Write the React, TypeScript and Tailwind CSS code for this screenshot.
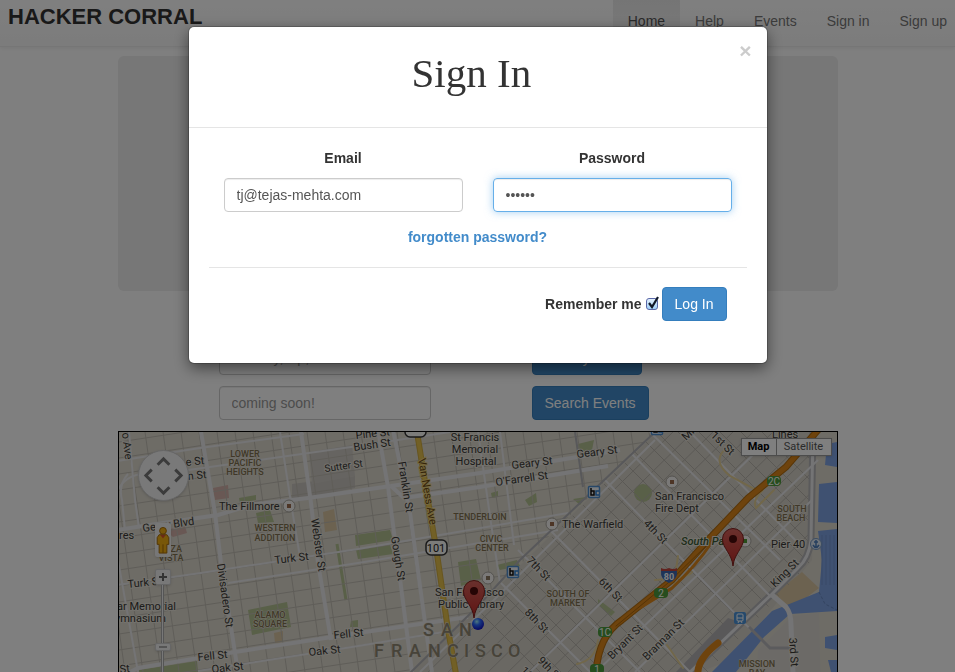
import React from "react";

type Label = { x: number; y: number; t: string; r?: number; s?: number; a?: "start" | "middle" };

const streets: Label[] = [
  { x: 186, y: 466, t: "e St", r: -6 },
  { x: 188, y: 480, t: "n St", r: -6 },
  { x: 325, y: 472, t: "Sutter St", r: -8, s: 10 },
  { x: 356, y: 439, t: "Pine St", r: -6 },
  { x: 354, y: 451, t: "Bush St", r: -8 },
  { x: 143, y: 532, t: "Geary Blvd", r: -8 },
  { x: 119, y: 539, t: "res" },
  { x: 128, y: 588, t: "Turk St", r: -6 },
  { x: 275, y: 564, t: "Turk St", r: -7 },
  { x: 198, y: 661, t: "Fell St", r: -6 },
  { x: 334, y: 639, t: "Fell St", r: -6 },
  { x: 212, y: 673, t: "Oak St", r: -6 },
  { x: 309, y: 656, t: "Oak St", r: -6 },
  { x: 120, y: 673, t: "St", r: -6 },
  { x: 122, y: 433, t: "o Ave", r: 83 },
  { x: 217, y: 564, t: "Divisadero St", r: 82 },
  { x: 311, y: 519, t: "Webster St", r: 82 },
  { x: 398, y: 462, t: "Franklin St", r: 81 },
  { x: 391, y: 537, t: "Gough St", r: 81 },
  { x: 512, y: 469, t: "Geary St", r: -7 },
  { x: 577, y: 458, t: "Geary St", r: -7 },
  { x: 496, y: 486, t: "O'Farrell St", r: -8 },
  { x: 526, y: 561, t: "7th St", r: 46 },
  { x: 524, y: 613, t: "8th St", r: 46 },
  { x: 537, y: 661, t: "9th St", r: 46 },
  { x: 520, y: 671, t: "10th St", r: 46 },
  { x: 598, y: 582, t: "6th St", r: 46 },
  { x: 643, y: 524, t: "4th St", r: 46 },
  { x: 710, y: 436, t: "1st St", r: 44 },
  { x: 686, y: 441, t: "Mission", r: -44 },
  { x: 612, y: 660, t: "Bryant St", r: -45 },
  { x: 647, y: 661, t: "Brannan St", r: -45 },
  { x: 775, y: 588, t: "King St", r: -45 },
  { x: 789, y: 638, t: "3rd St", r: 86 },
  { x: 117, y: 610, t: "ar Memorial" },
  { x: 115, y: 622, t: "ymnasium" },
  { x: 219, y: 510, t: "The Fillmore" },
  { x: 562, y: 528, t: "The Warfield" },
  { x: 655, y: 500, t: "San Francisco" },
  { x: 655, y: 512, t: "Fire Dept" },
  { x: 435, y: 596, t: "San Francisco" },
  { x: 438, y: 608, t: "Public Library" },
  { x: 771, y: 548, t: "Pier 40" },
  { x: 772, y: 438, t: "Lines" },
  { x: 475, y: 441, t: "St Francis", a: "middle" },
  { x: 475, y: 453, t: "Memorial", a: "middle" },
  { x: 476, y: 465, t: "Hospital", a: "middle" },
];

const areas: Label[] = [
  { x: 245, y: 457, t: "LOWER" },
  { x: 245, y: 466, t: "PACIFIC" },
  { x: 245, y: 475, t: "HEIGHTS" },
  { x: 275, y: 531, t: "WESTERN" },
  { x: 275, y: 541, t: "ADDITION" },
  { x: 170, y: 552, t: "ANZA" },
  { x: 171, y: 561, t: "VISTA" },
  { x: 270, y: 618, t: "ALAMO" },
  { x: 270, y: 627, t: "SQUARE" },
  { x: 480, y: 520, t: "TENDERLOIN" },
  { x: 491, y: 542, t: "CIVIC" },
  { x: 492, y: 551, t: "CENTER" },
  { x: 568, y: 597, t: "SOUTH OF" },
  { x: 568, y: 606, t: "MARKET" },
  { x: 792, y: 512, t: "SOUTH" },
  { x: 791, y: 521, t: "BEACH" },
  { x: 757, y: 667, t: "MISSION" },
  { x: 757, y: 676, t: "BAY" },
];

const range = (n: number) => Array.from({ length: n }, (_, i) => i);

const mainRoads = [
  "M201 432 L215 513 L221 563 L238 672",
  "M118 530 L143 526 L218 515 L251 505 L308 498 L391 486",
  "M391 486 L404 498 L480 487 L608 466",
  "M391 486 L480 473 L620 450",
  "M301 432 L311 503 L318 563 L331 640",
  "M118 678 L138 668 L235 652 L358 633 L468 617",
  "M378 430 L388 487 L395 540 L412 672",
  "M393 430 L410 513 L426 630 L432 672",
];
const minorRoads = [
  "M118 461 L200 448 L304 434",
  "M128 474 Q118 485 122 500 L125 530",
  "M118 585 L201 573 L358 549 L568 513",
  "M228 583 L358 563 L558 530",
  "M198 671 L358 646 L450 631",
  "M118 490 Q128 470 160 474 L358 446 L450 432",
  "M280 432 L291 503 L300 557",
  "M129 432 L135 500 L139 528",
  "M118 560 L138 672",
  "M478 432 L492 530 L500 583",
  "M500 432 L514 545",
  "M631 453 L771 597",
  "M605 480 L751 630",
  "M650 432 L780 560",
  "M690 432 L800 545",
  "M501 583 L590 672",
  "M518 550 L640 672",
  "M550 530 L690 672",
  "M420 672 L500 594 L655 440",
  "M530 672 L760 448",
  "M596 672 L818 460",
  "M635 672 L812 500",
];

function Poi({ x, y, fill = "#9b6a4c" }: { x: number; y: number; fill?: string }) {
  return (
    <g>
      <circle cx={x} cy={y} r="6" fill="#f4f3f0" stroke="#a9a59d" />
      <rect x={x - 2} y={y - 2} width="4" height="4" fill={fill} />
    </g>
  );
}

function Pin({ x, y }: { x: number; y: number }) {
  return (
    <g transform={`translate(${x} ${y})`}>
      <path
        d="M0 0 C-1 -12 -10.500 -18 -10.500 -27 A10.500 10.500 0 0 1 10.500 -27 C10.500 -18 1 -12 0 0Z"
        fill="url(#pin)"
        stroke="#82211d"
      />
      <circle cx="0" cy="-27" r="4" fill="#4a0b0a" />
    </g>
  );
}

function Bart({ x, y }: { x: number; y: number }) {
  return (
    <g>
      <rect x={x - 5.5} y={y - 5.5} width="11" height="11" rx="1" fill="#f3f6fa" stroke="#4f8fd0" strokeWidth="1.500" />
      <path d={`M${x - 3} ${y - 4} v7 h3 v-4 h-3`} fill="none" stroke="#111" strokeWidth="1.500" />
      <path d={`M${x + 5} ${y - 1} h-3 v4 h3`} fill="none" stroke="#2b7fd4" strokeWidth="1.500" />
    </g>
  );
}

function Exit({ x, y, t }: { x: number; y: number; t: string }) {
  return (
    <g>
      <rect x={x - 7} y={y - 5} width="14" height="10" rx="4" fill="#4c9a3c" />
      <text x={x} y={y + 4} fontSize="10" textAnchor="middle" fill="#fff">{t}</text>
    </g>
  );
}

function CityMap() {
  return (
    <svg
      className="block h-full w-full font-[Roboto,sans-serif]"
      viewBox="119 432 718 398"
      preserveAspectRatio="xMidYMin slice"
      role="img"
      aria-label="Map of San Francisco"
    >
      <defs>
        <linearGradient id="pin" x1="0" y1="0" x2="0" y2="1">
          <stop offset="0" stopColor="#d4615a" />
          <stop offset="1" stopColor="#c02a26" />
        </linearGradient>
        <radialGradient id="dot" cx="0.4" cy="0.3" r="0.7">
          <stop offset="0" stopColor="#9ff2ff" />
          <stop offset="0.4" stopColor="#2d6dff" />
          <stop offset="1" stopColor="#1010c0" />
        </radialGradient>
        <clipPath id="west"><path d="M100 430 H657 L411 672 V830 H100Z" /></clipPath>
        <clipPath id="soma"><path d="M657 430 H812 V560 L700 680 L411 680Z" /></clipPath>
      </defs>
      <rect x="119" y="432" width="718" height="398" fill="#dcd8cd" />

      <path d="M657 432 H815 L812 560 L730 660 L700 672 H411Z" fill="#d4d0c7" />
      <path d="M292 484 L355 476 V488 L312 497 L292 499Z" fill="#c8c4be" />
      <path d="M309 452 L352 445 L355 476 L312 484Z" fill="#cdc9c3" />
      <g fill="#b2c090">
        <path d="M248 610 L287 602 L291 627 L252 635Z" />
        <path d="M256 513 L270 510 L274 522 L258 523Z" />
        <path d="M239 498 L256 495 V500 L240 503Z" />
        <path d="M355 535 L390 530 L393 540 L356 546Z" />
        <path d="M356 550 L390 545 L393 554 L358 559Z" />
        <path d="M458 562 L476 559 L481 580 L461 586Z" />
        <path d="M497 565 L517 560 L520 566 L500 570Z" />
        <path d="M139 670 L197 661 L198 672 H139Z" />
        <path d="M491 493 L498 491 V497 L492 498Z" />
        <path d="M525 500 L536 493 L537 502 L529 506Z" />
        <path d="M573 499 L586 497 L580 505Z" />
        <path d="M578 444 L594 440 L592 450 L579 452Z" />
        <path d="M351 621 L358 620 V627 H350Z" />
        <path d="M598 599 L615 612 L611 616 L598 605Z" />
        <circle cx="643" cy="493" r="9" />
        <path d="M337 544 L346 600" stroke="#b2c090" strokeWidth="3" />
      </g>
      <path d="M213 488 L228 485 L229 498 L215 500Z M165 530 L185 526 L187 533 L173 537Z" fill="#d3b0a8" />
      <path d="M323 512 L334 509 L337 530 L325 532Z M274 633 L283 631 V642 L275 643Z M802 572 L819 588 L790 610 L772 596Z" fill="#d8c4a0" />

      <g stroke="#bfbbb1" strokeWidth="1" fill="none" clipPath="url(#west)">
        {range(34).map((i) => <path key={`v${i}`} d={`M${91 + i * 18} 432 l34 240`} />)}
        {range(28).map((i) => <path key={`h${i}`} d={`M119 ${442 + i * 16} l540 -82`} />)}
      </g>
      <g stroke="#b6b2aa" strokeWidth="1" fill="none" clipPath="url(#soma)">
        {range(24).map((i) => <path key={`a${i}`} d={`M${300 + i * 21} 432 l250 250`} />)}
        {range(22).map((i) => <path key={`b${i}`} d={`M${420 + i * 20} 680 l255 -250`} />)}
      </g>

      <g fill="#7ea2e2">
        <path d="M827 444 L837 442 V467 L825 465Z" />
        <path d="M819 484 L837 482 V523 L818 522Z" />
        <path d="M818 531 L837 529 V611 L790 614 L764 637 L736 672 H712 L772 611 L819 592 L822 560Z" />
        <path d="M825 637 L837 635 V650 L825 648Z" />
        <path d="M828 660 H837 V672 H831Z" />
      </g>
      <path d="M792 616 L819 613 L824 830 H750 L758 650Z" fill="#d8d5cf" />
      <g stroke="#6888c0" strokeDasharray="3 2" fill="none">
        <path d="M819 592 L825 604 L837 610" />
      </g>
      <path d="M822 535 V585 M826 535 V585 M830 535 V585 M834 535 V585" stroke="#7294d0" />
      <path d="M813 432 L811 540 Q809 558 798 568 L772 594 L690 672" fill="none" stroke="#b5b4b6" strokeWidth="7" />
      <path d="M676 672 L728 618 L740 622 L692 672Z" fill="#b2b1b3" />

      <g fill="none" stroke="#e8e8ea" strokeLinejoin="round">
        {minorRoads.map((d) => <path key={d} d={d} strokeWidth="2" />)}
        {mainRoads.map((d) => <path key={d} d={d} strokeWidth="4" />)}
        <path d="M813 432 L811 540 Q809 558 798 568 L772 594 L690 672" strokeWidth="3" />
        <path d="M771 594 L786 607 Q791 613 791 625 L793 672" strokeWidth="5" />
      </g>
      <path d="M749 627 L770 648 H792" fill="none" stroke="#b7b6ba" strokeWidth="3" />
      <path d="M405 678 L480 604 L520 560 L600 484 L655 432 M575 432 L583 487" fill="none" stroke="#b0b0b4" strokeWidth="2" />

      <g fill="none" strokeLinecap="round">
        <path d="M728 447 Q710 460 730 476 L756 490 Q768 488 778 476 M763 490 Q752 500 756 508 L774 490 M678 556 L674 584 M655 580 Q690 578 692 572 M577 664 Q596 660 598 640 M667 645 L683 668" stroke="#e3cf95" strokeWidth="2" />
        <path d="M417 432 L430 513 L436 547 L448 630 L456 674" stroke="#d0ac3f" strokeWidth="6" />
        <path d="M417 432 L430 513 L436 547 L448 630 L456 674" stroke="#e5c04c" strokeWidth="4" />
        <path d="M818 430 L786 467 L748 498 L710 538 L672 580 L622 620 Q598 636 596 674" stroke="#b06c10" strokeWidth="7" />
        <path d="M818 430 L786 467 L748 498 L710 538 L672 580 L622 620 Q598 636 596 674" stroke="#dc861a" strokeWidth="5" />
        <path d="M712 542 Q696 566 672 588 L640 608" stroke="#dc861a" strokeWidth="3" />
        <path d="M706 546 L668 583 L616 626" stroke="#a8660e" strokeWidth="1" />
        <path d="M718 643 Q696 660 698 676" stroke="#dc861a" strokeWidth="7" />
      </g>

      <g fontSize="11" fill="#3a3936" stroke="#e6e2d8" strokeWidth="2" paintOrder="stroke">
        {streets.map((l) => (
          <text
            key={`${l.t}${l.x}`}
            x={l.x}
            y={l.y}
            fontSize={l.s ?? 11}
            textAnchor={l.a ?? "start"}
            transform={l.r ? `rotate(${l.r} ${l.x} ${l.y})` : undefined}
          >
            {l.t}
          </text>
        ))}
        <text x="681" y="545" fontStyle="italic" fontWeight="500" fill="#3c5a34">South Park</text>
        <text x="418" y="459" transform="rotate(80 418 459)" fill="#6b4a14" stroke="#e9cf7c">Van Ness Ave</text>
      </g>
      <g fontSize="9" fontWeight="500" fill="#80714f" stroke="#e2ded3" strokeWidth="1" paintOrder="stroke" textAnchor="middle">
        {areas.map((l) => <text key={`${l.t}${l.y}`} x={l.x} y={l.y}>{l.t}</text>)}
      </g>
      <g fontSize="18" fontWeight="500" fill="#8e8672" stroke="#dcd8cd" strokeWidth="1" paintOrder="stroke">
        <text x="423 441 459" y="636">SAN</text>
        <text x="374 391 409 428 447 464 475 491 508" y="657">FRANCISCO</text>
      </g>

      <Poi x={289} y={506} />
      <Poi x={552} y={524} />
      <Poi x={672} y={482} />
      <Poi x={488} y={578} fill="#8d7a63" />
      <Poi x={745} y={541} fill="#4e9a35" />
      <circle cx="816" cy="544" r="5.500" fill="#dfe9f5" stroke="#7799c4" />
      <path d="M816 540 v7 M813 545 q3 5 6 0 M814 542 h4" stroke="#4e7fbd" fill="none" strokeWidth="1.500" />
      <Bart x={594} y={492} />
      <Bart x={513} y={572} />
      <Bart x={657} y={429} />
      <Exit x={774} y={481} t="2C" />
      <Exit x={661} y={593} t="2" />
      <Exit x={605} y={632} t="1C" />
      <Exit x={597} y={669} t="1" />

      <rect x="426" y="540" width="21" height="15" rx="5" fill="#f8f8f5" stroke="#333" strokeWidth="1.500" />
      <text x="436" y="552" fontSize="11" textAnchor="middle" fill="#222">101</text>
      <rect x="405" y="422" width="21" height="15" rx="5" fill="#f8f8f5" stroke="#333" strokeWidth="1.500" />
      <path d="M661 571 V568 Q665 570 669 568 Q673 570 677 568 V571Z" fill="#c3453c" />
      <path d="M661 571 H677 Q678 579 669 583 Q660 579 661 571Z" fill="#3d69b0" />
      <text x="669" y="580" fontSize="9" fontWeight="bold" textAnchor="middle" fill="#fff">80</text>
      <rect x="734" y="612" width="12" height="12" rx="2" fill="#4a92d8" />
      <rect x="737" y="614" width="6" height="7" rx="1" fill="none" stroke="#fff" />
      <path d="M737 618 h6 M738 623 l1 -2 M742 623 l-1 -2" stroke="#fff" />

      <circle cx="478" cy="624" r="6" fill="url(#dot)" />
      <Pin x={474} y={618} />
      <Pin x={733} y={566} />
    </svg>
  );
}

function MapControls() {
  const zoomButton =
    "flex w-4 items-center justify-center rounded-xs border border-[#ccc] bg-[#f0f0f0] text-[#666] shadow-sm";
  return (
    <>
      <div className="absolute left-[19px] top-[18px] size-[51px] rounded-full border border-[#ccc] bg-[#f2f2f2] shadow">
        <svg viewBox="0 0 50 50" className="size-full" fill="none" stroke="#777" strokeWidth="3">
          <path d="M19 14 L25 8 L31 14 M19 37 L25 43 L31 37 M13 19 L7 25 L13 31 M37 19 L43 25 L37 31" />
        </svg>
      </div>
      <div className="absolute left-9 top-[91px] flex w-4 flex-col items-center">
        <div className="flex h-[34px] w-4 justify-center rounded-xs bg-[#eee] shadow">
          <svg viewBox="0 0 14 30" className="mt-[3px] h-[29px] w-[14px]">
            <path d="M3 9 H11 L13 12 V19 H11 V28 H3 V19 H1 V12Z" fill="#f0ae12" stroke="#a56a08" />
            <path d="M4 9 H10 L7 13Z" fill="#d9532c" />
            <path d="M7 19 V28" stroke="#a56a08" />
            <circle cx="7" cy="5" r="3.500" fill="#f0ae12" stroke="#a56a08" />
          </svg>
        </div>
        <button aria-label="Zoom in" className={`${zoomButton} mt-3 h-4`}>
          <svg viewBox="0 0 10 10" className="size-[10px]" stroke="currentColor" strokeWidth="2"><path d="M1 5 H9 M5 1 V9" /></svg>
        </button>
        <div className="h-[58px] w-[3px] border-x border-[#aaa] bg-[#f0f0f0]" />
        <button aria-label="Zoom out" className={`${zoomButton} h-2`}>
          <svg viewBox="0 0 10 4" className="h-1 w-[10px]" stroke="currentColor"><path d="M1 2 H9" /></svg>
        </button>
        <div className="h-[58px] w-[3px] border-x border-[#aaa] bg-[#f0f0f0]" />
      </div>
      <div className="absolute right-[5px] top-[6px] flex h-[18px] border border-[#999] bg-white font-[Roboto,sans-serif] text-[11px] leading-4 shadow">
        <button className="w-[35px] border-r border-[#999] font-bold text-black">Map</button>
        <button className="w-[54px] text-[#565656]">Satellite</button>
      </div>
    </>
  );
}

const navLinks = ["Home", "Help", "Events", "Sign in", "Sign up"];
const searchInput =
  "h-[34px] w-[212px] rounded border border-[#ccc] bg-white px-3 text-sm placeholder:text-[#999] shadow-[inset_0_1px_1px_rgba(0,0,0,0.075)]";
const primaryButton = "h-[34px] rounded border border-[#357ebd] bg-[#428bca] px-3 text-sm text-white";
const fieldInput = "h-[34px] w-full rounded border px-3 text-sm text-[#555] outline-none";

function SignInDialog() {
  return (
    <div className="fixed inset-0 flex items-start justify-center bg-black/50 px-4 pt-[27px]">
      <div
        role="dialog"
        aria-modal="true"
        aria-labelledby="sign-in-title"
        className="w-full max-w-[578px] rounded-[5px] bg-white shadow-[0_0_0_1px_rgba(0,0,0,0.2),0_5px_15px_rgba(0,0,0,0.5)]"
      >
        <div className="flex h-[101px] items-start border-b border-[#e5e5e5] px-[15px] pt-[14px]">
          <h1 id="sign-in-title" className="flex-1 text-center font-['Liberation_Serif',serif] text-[41px] leading-[64px]">
            Sign In
          </h1>
          <button aria-label="Close" className="text-[21px] font-bold leading-5 text-[#ccc]">×</button>
        </div>
        <form className="px-5 pb-[42px] pt-5 text-sm leading-5" onSubmit={(e) => e.preventDefault()}>
          <div className="grid grid-cols-2 gap-[30px] px-[15px]">
            <div>
              <label htmlFor="email" className="mb-[10px] block text-center font-bold">Email</label>
              <input
                id="email"
                type="email"
                defaultValue="tj@tejas-mehta.com"
                className={`${fieldInput} border-[#ccc] shadow-[inset_0_1px_1px_rgba(0,0,0,0.075)]`}
              />
            </div>
            <div>
              <label htmlFor="password" className="mb-[10px] block text-center font-bold">Password</label>
              <input
                id="password"
                type="password"
                defaultValue="123456"
                className={`${fieldInput} border-[#66afe9] shadow-[inset_0_1px_1px_rgba(0,0,0,0.075),0_0_8px_rgba(102,175,233,0.6)]`}
              />
            </div>
          </div>
          <div className="mt-[15px] text-center">
            <a href="#forgot" className="font-bold text-[#428bca]">forgotten password?</a>
          </div>
          <hr className="mb-[19px] mt-5 border-[#e5e5e5]" />
          <div className="flex items-center justify-end gap-1 pr-5">
            <label htmlFor="remember" className="font-bold">Remember me</label>
            <span className="relative size-3">
              <input
                id="remember"
                type="checkbox"
                defaultChecked
                className="block size-3 appearance-none rounded-[3px] border border-[#5a68a8] bg-linear-to-b from-[#e2effc] to-[#9fd0f8]"
              />
              <svg viewBox="0 0 14 14" className="pointer-events-none absolute -top-[2px] left-0 size-[14px]">
                <path d="M3 7 L6 11 L12 1" fill="none" stroke="#101828" strokeWidth="2.200" />
              </svg>
            </span>
            <button type="submit" className={primaryButton}>Log In</button>
          </div>
        </form>
      </div>
    </div>
  );
}

export default function App() {
  return (
    <div className="h-screen overflow-hidden bg-white font-['Liberation_Sans',Arial,sans-serif] text-[#333]">
      <header className="flex h-[47px] justify-between overflow-hidden border-b border-[#ececec] bg-linear-to-b from-white to-[#f8f8f8] pl-2 shadow-[0_1px_4px_rgba(0,0,0,0.08)]">
        <a href="#home" className="text-[22px] font-bold leading-[34px]">HACKER CORRAL</a>
        <nav className="-mr-[7px] flex">
          {navLinks.map((name) => (
            <a
              key={name}
              href={`#${name}`}
              className={
                name === "Home"
                  ? "bg-linear-to-b from-[#ebebeb] to-[#f3f3f3] px-[15px] text-sm leading-[42px] text-[#555]"
                  : "px-[15px] text-sm leading-[42px] text-[#777]"
              }
            >
              {name}
            </a>
          ))}
        </nav>
      </header>
      <main className="mx-auto w-full max-w-[720px] pt-[9px]">
        <div className="h-[235px] rounded-md bg-[#eee]" />
        <form className="mt-[50px] grid grid-cols-[212px_auto] items-center justify-items-start gap-x-[101px] gap-y-[11px] pl-[101px]">
          <input aria-label="Location" placeholder="Country, zip, etc." className={searchInput} />
          <button type="button" className={primaryButton}>Nearby Event</button>
          <input aria-label="Search" placeholder="coming soon!" className={searchInput} />
          <button type="button" className={primaryButton}>Search Events</button>
        </form>
        <div className="relative mt-[11px] h-[400px] overflow-hidden border border-black">
          <CityMap />
          <MapControls />
        </div>
      </main>
      <SignInDialog />
    </div>
  );
}
